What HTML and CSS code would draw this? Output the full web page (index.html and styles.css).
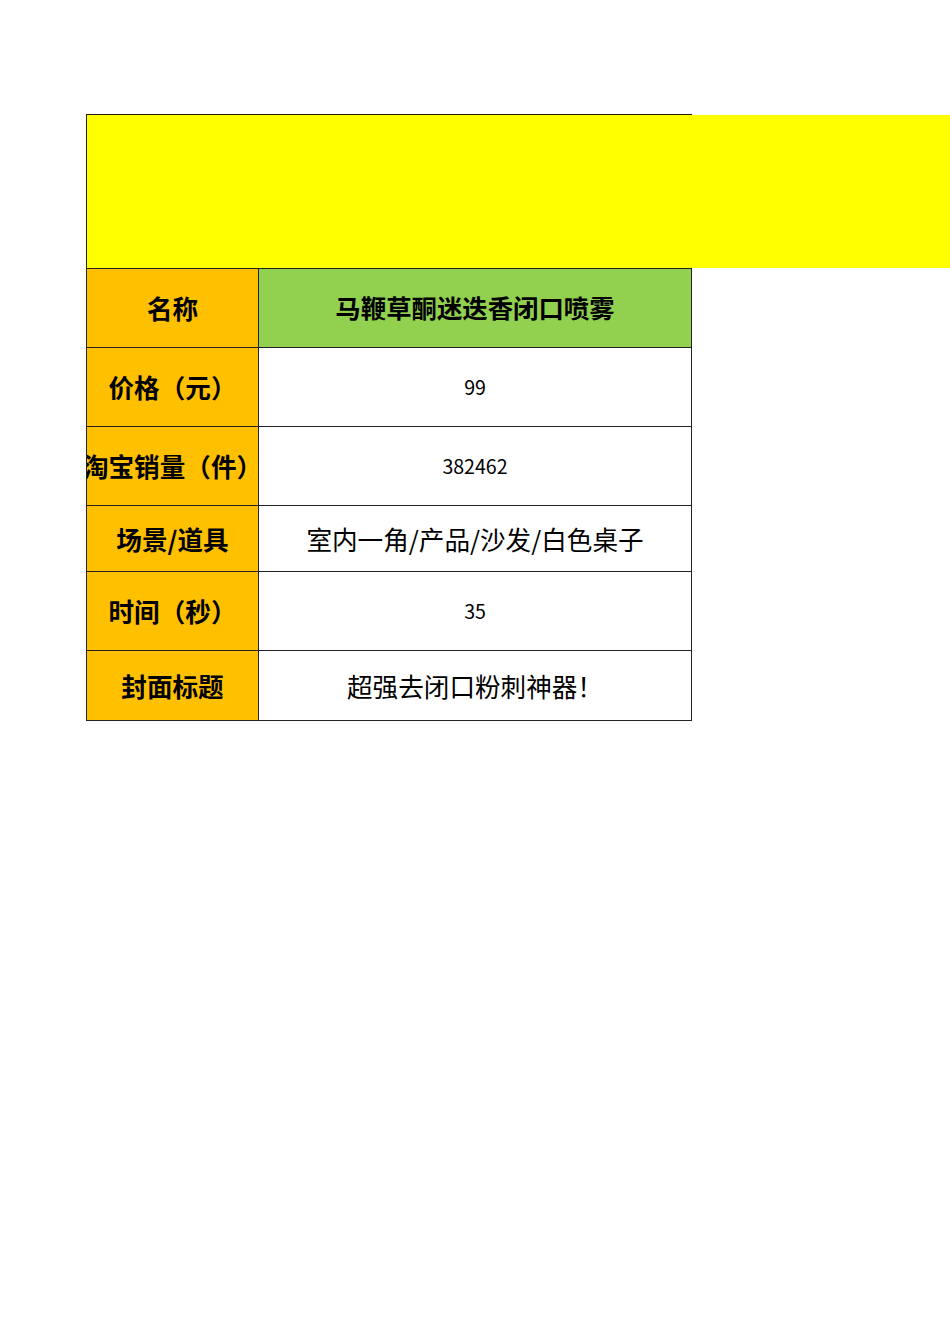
FILE: index.html
```html
<!DOCTYPE html>
<html lang="zh-CN">
<head>
<meta charset="utf-8">
<title>产品信息</title>
<link rel="stylesheet" href="styles.css">
</head>
<body>
<div class="page">
  <div class="banner">
    <div class="banner-main"></div>
    <div class="banner-ext"></div>
  </div>
  <div class="sheet">
    <div class="cell label">名称</div>
    <div class="cell value title">马鞭草酮迷迭香闭口喷雾</div>
    <div class="cell label">价格（元）</div>
    <div class="cell value num">99</div>
    <div class="cell label">淘宝销量（件）</div>
    <div class="cell value num">382462</div>
    <div class="cell label">场景/道具</div>
    <div class="cell value">室内一角/产品/沙发/白色桌子</div>
    <div class="cell label">时间（秒）</div>
    <div class="cell value num">35</div>
    <div class="cell label">封面标题</div>
    <div class="cell value">超强去闭口粉刺神器！</div>
  </div>
</div>
</body>
</html>
```

FILE: styles.css
```css
html, body {
  margin: 0;
  padding: 0;
  background: #fff;
}
body {
  font-family: "Noto Sans CJK SC", "Noto Sans", sans-serif;
  color: #000;
}
.page {
  padding-top: 114px;
  padding-left: 86px;
}
.banner {
  display: flex;
  height: 154px;
}
.banner-main {
  width: 605px;
  background: #ffff00;
  border-top: 1px solid #222;
  border-left: 1px solid #222;
}
.banner-ext {
  flex: 1;
  margin-top: 1px;
  background: #ffff00;
}
.sheet {
  display: grid;
  width: 604px;
  grid-template-columns: 171px 432px;
  grid-template-rows: 78px 78px 78px 65px 78px 69px;
  gap: 1px;
  padding: 1px;
  background: #222;
}
.cell {
  display: flex;
  align-items: center;
  justify-content: center;
  overflow: hidden;
  white-space: nowrap;
  font-size: 25.6px;
  line-height: 1;
}
.label {
  background: #ffc000;
  font-weight: 700;
}
.value {
  background: #fff;
}
.title {
  background: #92d050;
  font-weight: 700;
  font-size: 25.4px;
}
.num {
  font-size: 19.6px;
}
```
